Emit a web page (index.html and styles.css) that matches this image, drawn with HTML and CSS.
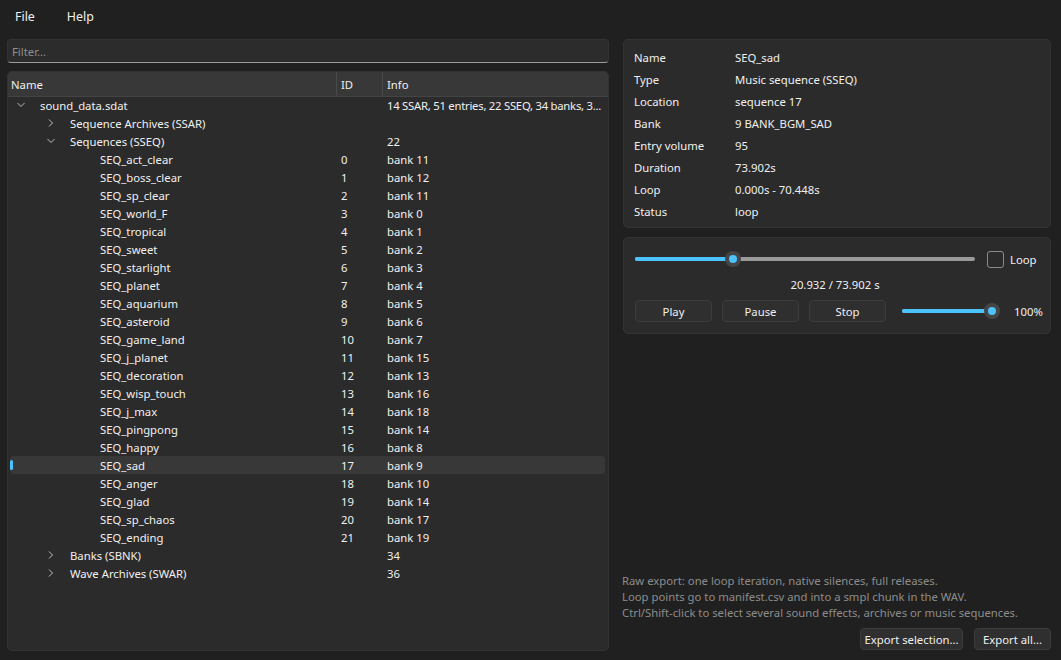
FILE: index.html
```html
<!DOCTYPE html>
<html lang="en">
<head>
    <meta charset="UTF-8">
    <title>SDAT Explorer</title>
    <link rel="stylesheet" href="styles.css">
</head>
<body>

<div class="menubar">
    <span class="menu">File</span>
    <span class="menu">Help</span>
</div>

<div class="main">
    <div class="left">
        <div class="filter">Filter...</div>
        <div class="tree">
            <div class="tree-head">
                <div class="col-name">Name</div>
                <div class="col-id">ID</div>
                <div class="col-info">Info</div>
            </div>
            <div class="rows">
                <div class="row lvl0"><div class="col-name"><svg class="chev" viewBox="0 0 8 5"><polyline points="0.5,0.5 4,4 7.5,0.5"/></svg>sound_data.sdat</div><div class="col-id"></div><div class="col-info summary">14 SSAR, 51 entries, 22 SSEQ, 34 banks, 3...</div></div>
                <div class="row lvl1"><div class="col-name"><svg class="chev" viewBox="0 0 8 8"><polyline points="2,0.5 5.5,4 2,7.5"/></svg>Sequence Archives (SSAR)</div><div class="col-id"></div><div class="col-info"></div></div>
                <div class="row lvl1"><div class="col-name"><svg class="chev" viewBox="0 0 8 5"><polyline points="0.5,0.5 4,4 7.5,0.5"/></svg>Sequences (SSEQ)</div><div class="col-id"></div><div class="col-info">22</div></div>
                <div class="row lvl2"><div class="col-name">SEQ_act_clear</div><div class="col-id">0</div><div class="col-info">bank 11</div></div>
                <div class="row lvl2"><div class="col-name">SEQ_boss_clear</div><div class="col-id">1</div><div class="col-info">bank 12</div></div>
                <div class="row lvl2"><div class="col-name">SEQ_sp_clear</div><div class="col-id">2</div><div class="col-info">bank 11</div></div>
                <div class="row lvl2"><div class="col-name">SEQ_world_F</div><div class="col-id">3</div><div class="col-info">bank 0</div></div>
                <div class="row lvl2"><div class="col-name">SEQ_tropical</div><div class="col-id">4</div><div class="col-info">bank 1</div></div>
                <div class="row lvl2"><div class="col-name">SEQ_sweet</div><div class="col-id">5</div><div class="col-info">bank 2</div></div>
                <div class="row lvl2"><div class="col-name">SEQ_starlight</div><div class="col-id">6</div><div class="col-info">bank 3</div></div>
                <div class="row lvl2"><div class="col-name">SEQ_planet</div><div class="col-id">7</div><div class="col-info">bank 4</div></div>
                <div class="row lvl2"><div class="col-name">SEQ_aquarium</div><div class="col-id">8</div><div class="col-info">bank 5</div></div>
                <div class="row lvl2"><div class="col-name">SEQ_asteroid</div><div class="col-id">9</div><div class="col-info">bank 6</div></div>
                <div class="row lvl2"><div class="col-name">SEQ_game_land</div><div class="col-id">10</div><div class="col-info">bank 7</div></div>
                <div class="row lvl2"><div class="col-name">SEQ_j_planet</div><div class="col-id">11</div><div class="col-info">bank 15</div></div>
                <div class="row lvl2"><div class="col-name">SEQ_decoration</div><div class="col-id">12</div><div class="col-info">bank 13</div></div>
                <div class="row lvl2"><div class="col-name">SEQ_wisp_touch</div><div class="col-id">13</div><div class="col-info">bank 16</div></div>
                <div class="row lvl2"><div class="col-name">SEQ_j_max</div><div class="col-id">14</div><div class="col-info">bank 18</div></div>
                <div class="row lvl2"><div class="col-name">SEQ_pingpong</div><div class="col-id">15</div><div class="col-info">bank 14</div></div>
                <div class="row lvl2"><div class="col-name">SEQ_happy</div><div class="col-id">16</div><div class="col-info">bank 8</div></div>
                <div class="row lvl2 selected"><div class="col-name">SEQ_sad</div><div class="col-id">17</div><div class="col-info">bank 9</div></div>
                <div class="row lvl2"><div class="col-name">SEQ_anger</div><div class="col-id">18</div><div class="col-info">bank 10</div></div>
                <div class="row lvl2"><div class="col-name">SEQ_glad</div><div class="col-id">19</div><div class="col-info">bank 14</div></div>
                <div class="row lvl2"><div class="col-name">SEQ_sp_chaos</div><div class="col-id">20</div><div class="col-info">bank 17</div></div>
                <div class="row lvl2"><div class="col-name">SEQ_ending</div><div class="col-id">21</div><div class="col-info">bank 19</div></div>
                <div class="row lvl1"><div class="col-name"><svg class="chev" viewBox="0 0 8 8"><polyline points="2,0.5 5.5,4 2,7.5"/></svg>Banks (SBNK)</div><div class="col-id"></div><div class="col-info">34</div></div>
                <div class="row lvl1"><div class="col-name"><svg class="chev" viewBox="0 0 8 8"><polyline points="2,0.5 5.5,4 2,7.5"/></svg>Wave Archives (SWAR)</div><div class="col-id"></div><div class="col-info">36</div></div>
            </div>
        </div>
    </div>

    <div class="right">
        <div class="card props">
            <div class="prop"><span class="key">Name</span><span>SEQ_sad</span></div>
            <div class="prop"><span class="key">Type</span><span>Music sequence (SSEQ)</span></div>
            <div class="prop"><span class="key">Location</span><span>sequence 17</span></div>
            <div class="prop"><span class="key">Bank</span><span>9 BANK_BGM_SAD</span></div>
            <div class="prop"><span class="key">Entry volume</span><span>95</span></div>
            <div class="prop"><span class="key">Duration</span><span>73.902s</span></div>
            <div class="prop"><span class="key">Loop</span><span>0.000s - 70.448s</span></div>
            <div class="prop"><span class="key">Status</span><span>loop</span></div>
        </div>

        <div class="card player">
            <div class="seek-row">
                <div class="slider seek">
                    <div class="fill" style="width: 28.8%"></div>
                    <div class="knob" style="left: 28.8%"></div>
                </div>
                <div class="check"></div>
                <span class="check-label">Loop</span>
            </div>
            <div class="time">20.932 / 73.902 s</div>
            <div class="controls">
                <button class="btn">Play</button>
                <button class="btn">Pause</button>
                <button class="btn">Stop</button>
                <div class="slider volume">
                    <div class="fill" style="width: 100%"></div>
                    <div class="knob" style="left: 100%"></div>
                </div>
                <span class="vol-label">100%</span>
            </div>
        </div>

        <div class="spacer"></div>

        <div class="hint">
            <div>Raw export: one loop iteration, native silences, full releases.</div>
            <div>Loop points go to manifest.csv and into a smpl chunk in the WAV.</div>
            <div>Ctrl/Shift-click to select several sound effects, archives or music sequences.</div>
        </div>
        <div class="export">
            <button class="btn export-sel">Export selection...</button>
            <button class="btn export-all">Export all...</button>
        </div>
    </div>
</div>

</body>
</html>
```

FILE: styles.css
```css
* { box-sizing: border-box; }
html, body { height: 100%; }
body { margin: 0; background-color: #202020; color: #f0f0f0; font-family: "Noto Sans", "Open Sans", sans-serif; font-size: 11.3px; display: flex; flex-direction: column; overflow: hidden; }

.menubar { height: 32px; display: flex; align-items: center; padding-left: 15px; flex-shrink: 0; }
.menu { margin-right: 32px; font-size: 12.4px; }

.main { flex: 1; display: flex; padding: 7px 10px 9px 7px; gap: 14px; min-height: 0; }
.left { width: 602px; flex-shrink: 0; display: flex; flex-direction: column; gap: 8px; }
.right { width: 428px; flex-shrink: 0; min-width: 0; display: flex; flex-direction: column; }

.filter { height: 24px; background-color: #2c2c2c; border: 1px solid #333; border-bottom: 1px solid #9a9a9a; border-radius: 4px; color: #8f8f8f; padding: 4px 6px 0 4px; }

.tree { flex: 1; background-color: #2b2b2b; border: 1px solid #333; border-radius: 5px; overflow: hidden; display: flex; flex-direction: column; }
.tree-head { display: flex; height: 25px; background-color: #383838; border-bottom: 1px solid #444; align-items: stretch; flex-shrink: 0; }
.tree-head > div { display: flex; align-items: center; }
.tree-head .col-name { width: 328px; padding-left: 3px; }
.tree-head .col-id { border-left: 1px solid #4a4a4a; width: 46px; padding-left: 4px; }
.tree-head .col-info { border-left: 1px solid #4a4a4a; padding-left: 4px; }

.rows { padding: 0 3px 0 2px; margin-top: -1px; }
.row { display: flex; height: 18px; align-items: center; position: relative; border-radius: 4px; }
.col-name { width: 326px; white-space: nowrap; }
.col-id { width: 46px; padding-left: 5px; }
.col-info { flex: 1; min-width: 0; padding-left: 5px; padding-right: 2px; white-space: nowrap; }
.summary { letter-spacing: -0.25px; }
.row .col-name { display: flex; align-items: center; }
.lvl0 .col-name { padding-left: 7px; }
.lvl1 .col-name { padding-left: 37px; }
.lvl2 .col-name { padding-left: 90px; }
.chev { width: 8px; height: 8px; margin-right: 15px; fill: none; stroke: #bdbdbd; stroke-width: 1; flex-shrink: 0; }
.selected { background-color: #383838; }
.selected::before { content: ""; position: absolute; left: 0; top: 4px; width: 3px; height: 10px; border-radius: 2px; background-color: #4cc2ff; }

.card { background-color: #2b2b2b; border: 1px solid #333; border-radius: 5px; }
.props { padding: 6px 10px 5px 10px; margin-bottom: 9px; }
.prop { display: flex; height: 22px; align-items: center; }
.key { width: 101px; }

.player { padding: 10px 11px 11px 11px; }
.seek-row { display: flex; align-items: center; height: 22px; }
.slider { position: relative; height: 4px; background-color: #9a9a9a; border-radius: 2px; flex-shrink: 0; }
.slider .fill { height: 4px; background-color: #4cc2ff; border-radius: 2px; }
.slider .knob { position: absolute; top: 50%; width: 16px; height: 16px; margin: -8px 0 0 -8px; border-radius: 50%; background-color: #454545; }
.slider .knob::after { content: ""; position: absolute; left: 4px; top: 4px; width: 8px; height: 8px; border-radius: 50%; background-color: #4cc2ff; }
.seek { width: 340px; }
.volume { width: 90px; margin-left: 6px; }
.check { width: 17px; height: 17px; border: 1px solid #8a8a8a; border-radius: 3px; margin-left: 12px; flex-shrink: 0; }
.check-label { margin-left: 6px; }
.time { text-align: center; height: 30px; padding-top: 7px; padding-right: 4px; }
.controls { display: flex; align-items: center; gap: 10px; }
.controls .vol-label { margin-left: 12px; white-space: nowrap; }
.btn { font-family: inherit; font-size: 11.3px; color: #f0f0f0; background-color: #2f2f2f; border: 1px solid #3c3c3c; border-radius: 4px; height: 22px; padding: 0; flex-shrink: 0; }
.controls .btn { width: 77px; }

.spacer { flex: 1; }
.hint { color: #8c8c8c; line-height: 16px; margin-left: -1px; }
.export { display: flex; justify-content: flex-end; gap: 11px; margin-top: 7px; margin-bottom: 1px; }
.export-sel { width: 103px; }
.export-all { width: 77px; }
```
